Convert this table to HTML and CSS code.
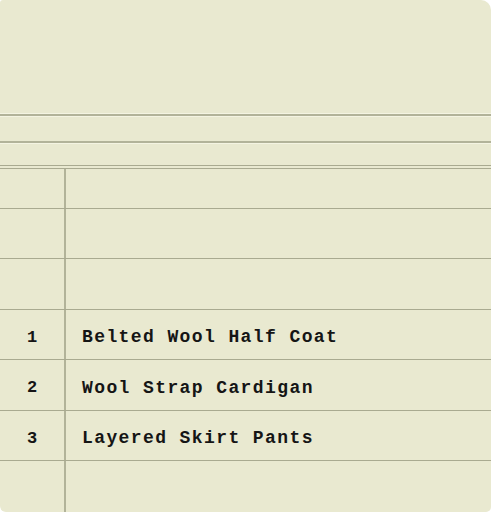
FILE: index.html
```html
<!DOCTYPE html>
<html>
<head>
<meta charset="utf-8">
<link rel="stylesheet" href="styles.css">
</head>
<body>
<div class="card">
  <div class="head"></div>
  <div class="band"></div>
  <div class="band band-last"></div>
  <div class="rows">
    <div class="row first"><div class="num"></div><div class="name"></div></div>
    <div class="row"><div class="num"></div><div class="name"></div></div>
    <div class="row"><div class="num"></div><div class="name"></div></div>
    <div class="row"><div class="num">1</div><div class="name">Belted Wool Half Coat</div></div>
    <div class="row"><div class="num">2</div><div class="name">Wool Strap Cardigan</div></div>
    <div class="row"><div class="num">3</div><div class="name">Layered Skirt Pants</div></div>
    <div class="row last"><div class="num"></div><div class="name"></div></div>
  </div>
</div>
</body>
</html>
```
FILE: styles.css
```css
html, body {
  margin: 0;
  padding: 0;
  background: #ffffff;
}
.card {
  width: 491px;
  height: 512px;
  background: #e9e9d0;
  border-radius: 3px 10px 5px 6px;
  overflow: hidden;
  display: flex;
  flex-direction: column;
  font-family: "Liberation Mono", "DejaVu Sans Mono", monospace;
  color: #151515;
}
.head {
  height: 114px;
  border-bottom: 2px solid #b2b399;
  box-shadow: 0 -1px 0 #f4f4e2 inset;
  flex: none;
}
.band {
  height: 24px;
  border-top: 1px solid #f4f4e2;
  border-bottom: 2px solid #b2b399;
  flex: none;
}
.band-last {
  height: 21px;
  border-bottom: 4px double #a9aa90;
}
.rows {
  flex: 1;
  display: flex;
  flex-direction: column;
}
.row {
  display: grid;
  grid-template-columns: 66px 1fr;
  height: 49.4px;
  border-bottom: 1px solid #a9aa90;
  align-items: center;
  flex: none;
}
.row.first {
  height: 39px;
}
.row.last {
  border-bottom: none;
  flex: 1;
}
.num {
  height: 100%;
  border-right: 2px solid #b2b399;
  display: flex;
  align-items: center;
  justify-content: center;
  font-weight: bold;
  font-size: 17px;
  padding-top: 6px;
  box-sizing: border-box;
}
.name {
  padding-left: 16px;
  padding-top: 6px;
  font-weight: bold;
  font-size: 18px;
  letter-spacing: 1.4px;
}
```
